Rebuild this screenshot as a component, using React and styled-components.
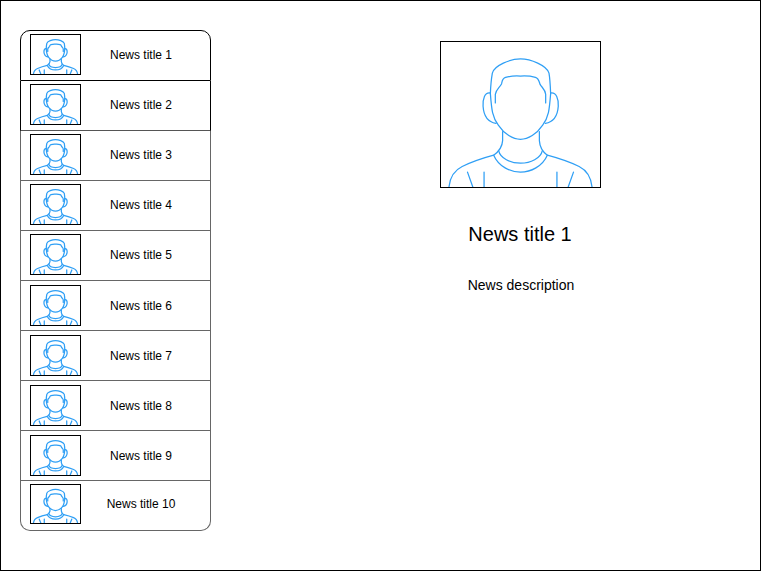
import React from "react";
import styled, { createGlobalStyle } from "styled-components";

const news = [1, 2, 3, 4, 5, 6, 7, 8, 9, 10].map((n) => ({
  id: n,
  title: `News title ${n}`,
}));

const GlobalStyle = createGlobalStyle`
  html, body {
    margin: 0;
    padding: 0;
    background: #fff;
  }
  body {
    font-family: "Liberation Sans", Arial, sans-serif;
    color: #000;
  }
`;

const Frame = styled.div`
  box-sizing: border-box;
  width: 761px;
  height: 571px;
  border: 1px solid #000;
  padding: 29px 0 0 19px;
  display: flex;
  align-items: flex-start;
`;

const List = styled.div`
  width: 191px;
  flex: none;
  display: flex;
  flex-direction: column;
`;

const Row = styled.div`
  box-sizing: border-box;
  height: 50px;
  flex: none;
  padding: ${({ $top }) => $top}px 0 0 9px;
  display: flex;
  align-items: flex-start;
  border-style: solid;
  border-width: 0 1px 1px 1px;
  border-color: ${({ $dark }) => ($dark ? "#000" : "#666")};
  &:first-child {
    height: 51px;
    border-top-width: 1px;
    border-radius: 10px 10px 0 0;
    border-bottom-color: #000;
  }
  &:nth-child(2) {
    border-bottom-color: #555;
  }
  &:last-child {
    border-radius: 0 0 10px 10px;
  }
`;

const Thumb = styled.div`
  box-sizing: border-box;
  width: 51px;
  height: ${({ $h }) => $h}px;
  flex: none;
  border: 1px solid #000;
  display: flex;
`;

const RowTitle = styled.div`
  flex: 1;
  height: ${({ $h }) => $h}px;
  display: flex;
  align-items: center;
  justify-content: center;
  font-size: 12px;
  padding-right: 9px;
  white-space: nowrap;
`;

const Detail = styled.div`
  flex: 1;
  padding: 11px 0 0 69px;
  display: flex;
  flex-direction: column;
  align-items: center;
`;

const Picture = styled.div`
  box-sizing: border-box;
  width: 161px;
  height: 147px;
  border: 1px solid #000;
  display: flex;
`;

const Title = styled.div`
  margin-top: 34px;
  font-size: 20px;
  line-height: 24px;
`;

const Description = styled.div`
  margin-top: 31px;
  margin-left: 2px;
  font-size: 14px;
  line-height: 16px;
`;

const Line = styled.path`
  vector-effect: non-scaling-stroke;
`;

const Avatar = () => (
  <svg
    width="100%"
    height="100%"
    viewBox="31 34 480 438"
    preserveAspectRatio="none"
    fill="none"
    stroke="#2f9ff5"
    strokeWidth="1.25"
    strokeLinecap="round"
    strokeLinejoin="round"
  >
    <Line d="M180 190 C184 240 186 262 204 285 C222 312 248 328 271 328 C294 328 320 312 338 285 C356 262 358 240 362 190" />
    <Line d="M180 190 C181 165 183 145 186 128 C192 105 240 85 271 85 C302 85 350 105 357 128 C360 145 361 165 362 190" />
    <Line d="M195 218 V192 C197 178 208 172 214 160 C216 150 216 144 226 141 C240 137 255 136 271 137 C287 136 302 137 316 141 C326 144 326 150 330 162 C336 172 346 178 347 192 V218" />
    <Line d="M179 188 C163 186 157 205 158 228 C160 258 174 276 197 280" />
    <Line d="M363 188 C379 186 386 205 385 228 C383 258 369 276 346 280" />
    <Line d="M217 305 V332 C216 350 204 366 190 376 C160 384 125 396 95 410 C70 422 58 442 55 472" />
    <Line d="M328 305 V332 C329 350 338 366 352 376 C382 384 418 396 448 410 C472 422 484 442 487 472" />
    <Line d="M205 362 C210 385 240 400 271 400 C302 400 332 385 337 362" />
    <Line d="M190 376 C205 410 240 427 271 427 C302 427 337 410 352 376" />
    <Line d="M111 427 L127 472 M161 427 V472 M381 427 V472 M431 427 L415 472" />
  </svg>
);

const topFor = (id) => (id >= 6 && id <= 9 ? 4 : 3);

export default function App() {
  return (
    <>
      <GlobalStyle />
      <Frame>
        <List>
          {news.map((item) => {
            const h = item.id === 10 ? 40 : 41;
            return (
              <Row key={item.id} $top={topFor(item.id)} $dark={item.id <= 2}>
                <Thumb $h={h}>
                  <Avatar />
                </Thumb>
                <RowTitle $h={h}>{item.title}</RowTitle>
              </Row>
            );
          })}
        </List>
        <Detail>
          <Picture>
            <Avatar />
          </Picture>
          <Title>News title 1</Title>
          <Description>News description</Description>
        </Detail>
      </Frame>
    </>
  );
}
